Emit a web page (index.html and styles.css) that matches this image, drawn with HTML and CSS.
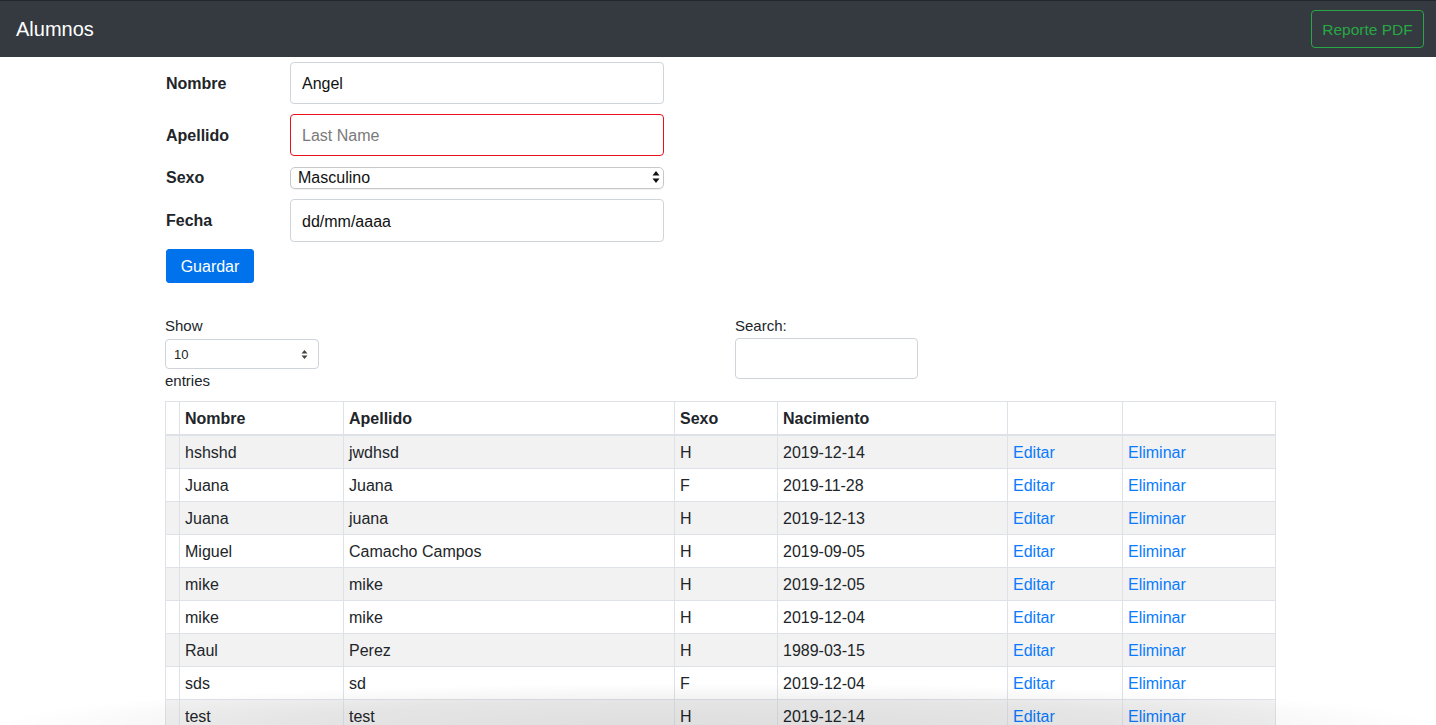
FILE: index.html
```html
<!DOCTYPE html>
<html lang="es">
<head>
<meta charset="utf-8">
<title>Alumnos</title>
<link rel="stylesheet" href="styles.css">
</head>
<body>
<nav class="navbar">
  <span class="brand">Alumnos</span>
  <button class="btn-outline-success">Reporte PDF</button>
</nav>

<main class="container">
  <form class="student-form">
    <label class="lbl">Nombre</label>
    <input class="form-control" type="text" value="Angel">
    <label class="lbl">Apellido</label>
    <input class="form-control invalid" type="text" placeholder="Last Name">
    <label class="lbl">Sexo</label>
    <div class="select-wrap">
      <select class="native-select"><option>Masculino</option><option>Femenino</option></select>
      <svg class="select-arrows" width="8" height="14" viewBox="0 0 8 14"><path d="M4 1 L7.5 5.5 H0.5 Z M4 13 L7.5 8.5 H0.5 Z" fill="#111"/></svg>
    </div>
    <label class="lbl">Fecha</label>
    <input class="form-control fecha" type="text" value="dd/mm/aaaa">
  </form>
  <button class="btn-primary">Guardar</button>

  <div class="dt-controls">
    <div class="dt-length">
      <div class="dt-text">Show</div>
      <div class="small-select-wrap">
        <select class="small-select"><option>10</option><option>25</option></select>
        <svg class="small-arrows" width="7" height="11" viewBox="0 0 7 11"><path d="M3.5 1 L6.5 4.5 H0.5 Z M3.5 10 L6.5 6.5 H0.5 Z" fill="#444"/></svg>
      </div>
      <div class="dt-text">entries</div>
    </div>
    <div class="dt-search">
      <div class="dt-text">Search:</div>
      <input class="search-input" type="text">
    </div>
  </div>

  <table class="data-table">
    <colgroup>
      <col class="c0"><col class="c1"><col class="c2"><col class="c3"><col class="c4"><col class="c5"><col class="c6">
    </colgroup>
    <thead>
      <tr><th></th><th>Nombre</th><th>Apellido</th><th>Sexo</th><th>Nacimiento</th><th></th><th></th></tr>
    </thead>
    <tbody>
      <tr><td></td><td>hshshd</td><td>jwdhsd</td><td>H</td><td>2019-12-14</td><td><a href="#">Editar</a></td><td><a href="#">Eliminar</a></td></tr>
      <tr><td></td><td>Juana</td><td>Juana</td><td>F</td><td>2019-11-28</td><td><a href="#">Editar</a></td><td><a href="#">Eliminar</a></td></tr>
      <tr><td></td><td>Juana</td><td>juana</td><td>H</td><td>2019-12-13</td><td><a href="#">Editar</a></td><td><a href="#">Eliminar</a></td></tr>
      <tr><td></td><td>Miguel</td><td>Camacho Campos</td><td>H</td><td>2019-09-05</td><td><a href="#">Editar</a></td><td><a href="#">Eliminar</a></td></tr>
      <tr><td></td><td>mike</td><td>mike</td><td>H</td><td>2019-12-05</td><td><a href="#">Editar</a></td><td><a href="#">Eliminar</a></td></tr>
      <tr><td></td><td>mike</td><td>mike</td><td>H</td><td>2019-12-04</td><td><a href="#">Editar</a></td><td><a href="#">Eliminar</a></td></tr>
      <tr><td></td><td>Raul</td><td>Perez</td><td>H</td><td>1989-03-15</td><td><a href="#">Editar</a></td><td><a href="#">Eliminar</a></td></tr>
      <tr><td></td><td>sds</td><td>sd</td><td>F</td><td>2019-12-04</td><td><a href="#">Editar</a></td><td><a href="#">Eliminar</a></td></tr>
      <tr><td></td><td>test</td><td>test</td><td>H</td><td>2019-12-14</td><td><a href="#">Editar</a></td><td><a href="#">Eliminar</a></td></tr>
      <tr><td></td><td>test</td><td>test</td><td>H</td><td>2019-12-14</td><td><a href="#">Editar</a></td><td><a href="#">Eliminar</a></td></tr>
    </tbody>
  </table>
</main>
<div class="window-shadow"></div>
</body>
</html>
```

FILE: styles.css
```css
* { box-sizing: border-box; }

html, body {
  margin: 0;
  padding: 0;
  background: #fff;
  color: #212529;
  font-family: "Liberation Sans", Arial, Helvetica, sans-serif;
  font-size: 16px;
  line-height: 24px;
}

.navbar {
  height: 57px;
  background: #343a40;
  border-top: 1px solid #23272b;
  display: flex;
  align-items: center;
  justify-content: space-between;
  padding: 0 12px 0 16px;
}

.brand {
  color: #fff;
  font-size: 20px;
  line-height: 30px;
  padding-bottom: 1px;
}

.btn-outline-success {
  font-family: inherit;
  font-size: 15.5px;
  line-height: 24px;
  color: #28a745;
  background: transparent;
  border: 1px solid #28a745;
  border-radius: 4px;
  width: 113px;
  height: 38px;
  padding: 2px 0 0;
}

.container {
  width: 1110px;
  margin: 0 0 0 165px;
  padding-top: 5px;
}

.student-form {
  display: grid;
  grid-template-columns: 125px 374px;
  row-gap: 10px;
  align-items: center;
}

.lbl {
  font-weight: bold;
  padding-left: 1px;
  padding-top: 2px;
  line-height: 20px;
}

.form-control {
  height: 42px;
  width: 374px;
  border: 1px solid #ced4da;
  border-radius: 4px;
  padding: 2px 11px 0;
  font-family: inherit;
  font-size: 16px;
  color: #111;
  background: #fff;
  outline: none;
}

.form-control.fecha {
  height: 43px;
  margin-top: 1px;
}

.form-control.invalid {
  border-color: #e8101a;
  caret-color: #e8101a;
}

.form-control::placeholder { color: #7a7a7a; }

.select-wrap {
  position: relative;
  width: 374px;
  height: 22px;
}

.native-select {
  appearance: none;
  -webkit-appearance: none;
  width: 374px;
  height: 22px;
  border: 1px solid #c8c8c8;
  border-radius: 5px;
  background: #fff;
  font-family: inherit;
  font-size: 16px;
  color: #111;
  padding: 0 0 0 7px;
  box-shadow: 0 1px 1px rgba(0,0,0,0.06);
}

.select-arrows {
  position: absolute;
  right: 4px;
  top: 4px;
  pointer-events: none;
}

.btn-primary {
  display: block;
  margin: 7px 0 0 1px;
  width: 88px;
  height: 34px;
  background: #0073ec;
  color: #fff;
  border: 1px solid #0073ec;
  border-radius: 3px;
  font-family: inherit;
  font-size: 16px;
  padding: 2px 0 0;
}

.dt-controls {
  display: grid;
  grid-template-columns: 570px 1fr;
  margin-top: 31px;
  font-size: 15px;
}

.dt-text { line-height: 24px; }

.small-select-wrap {
  position: relative;
  width: 154px;
  height: 30px;
  margin: 1px 0 0;
}

.small-select {
  appearance: none;
  -webkit-appearance: none;
  width: 154px;
  height: 30px;
  border: 1px solid #ced4da;
  border-radius: 4px;
  background: #fff;
  font-family: inherit;
  font-size: 13px;
  color: #222;
  padding: 0 0 0 8px;
}

.small-arrows {
  position: absolute;
  right: 11px;
  top: 10px;
  pointer-events: none;
}

.search-input {
  display: block;
  width: 183px;
  height: 41px;
  border: 1px solid #ced4da;
  border-radius: 4px;
  background: #fff;
  outline: none;
}

.data-table {
  margin-top: 8px;
  width: 1110px;
  table-layout: fixed;
  border-collapse: collapse;
}

.c0 { width: 14px; }
.c1 { width: 164px; }
.c2 { width: 331px; }
.c3 { width: 103px; }
.c4 { width: 230px; }
.c5 { width: 115px; }
.c6 { width: 153px; }

.data-table th,
.data-table td {
  border: 1px solid #dee2e6;
  padding: 5px 5px 3px 5px;
  line-height: 24px;
  text-align: left;
  vertical-align: middle;
}

.data-table th {
  font-weight: bold;
  border-bottom: 2px solid #dee2e6;
}

.data-table tbody tr:nth-child(odd) { background: #f2f2f2; }

.data-table a {
  color: #0a7bff;
  text-decoration: none;
}

.window-shadow {
  position: fixed;
  left: 0;
  right: 0;
  bottom: 0;
  height: 42px;
  pointer-events: none;
  background: radial-gradient(ellipse 50% 100% at 50% 100%, rgba(0,0,0,0.08) 0%, rgba(0,0,0,0.05) 60%, rgba(0,0,0,0) 100%);
}
```
